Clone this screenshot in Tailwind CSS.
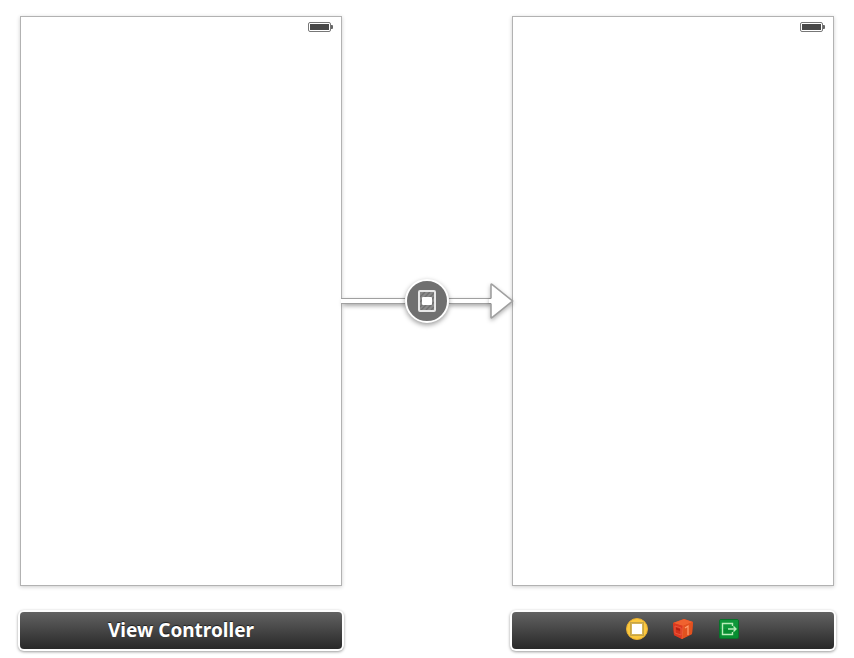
<!DOCTYPE html>
<html lang="en">
<head>
<meta charset="utf-8">
<meta name="viewport" content="width=device-width, initial-scale=1">
<title>Storyboard</title>
<script src="https://cdn.jsdelivr.net/npm/@tailwindcss/browser@4"></script>
</head>
<body class="bg-white font-['Noto_Sans','Open_Sans',sans-serif]">
<main class="grid grid-cols-[322fr_170fr_322fr] gap-y-[26px] px-5 pt-4 pb-2">

  <section aria-label="View Controller scene" class="flex min-h-[570px] items-start justify-end border border-[#b2b2b2] bg-white px-[7px] pt-[5px] shadow-[0_1px_4px_rgba(0,0,0,0.2)]">
    <svg class="block" width="26" height="10" viewBox="0 0 26 10" role="img" aria-label="Battery full">
      <rect x=".5" y=".5" width="22" height="9" rx="1.5" fill="#fff" stroke="#777"/>
      <rect x="2" y="2" width="19" height="6" fill="#484848"/>
      <path d="M23 3h1q1 0 1 1v2q0 1-1 1h-1z" fill="#666"/>
    </svg>
  </section>

  <div class="z-10 -ml-px flex items-center">
    <div class="h-[6px] flex-1 border-y border-[#a0a0a0] bg-white shadow-[2px_2px_4px_rgba(0,0,0,0.35)]"></div>
    <button type="button" aria-label="Modal segue" class="z-10 flex size-11 shrink-0 items-center justify-center rounded-full border-2 border-white bg-[#707070] shadow-[0_2px_5px_rgba(0,0,0,0.4)]">
      <svg class="block" width="18" height="22" viewBox="0 0 18 22" aria-hidden="true">
        <rect x="1" y="1" width="16" height="20" rx="1" fill="#8a8a8a"/>
        <path d="M2 7l5-5M2 12L12 2M2 17L16 3M3 20L16 7M8 20l8-8M13 20l3-3" stroke="#707070" stroke-width="1.4"/>
        <rect x="1" y="1" width="16" height="20" rx="1" fill="none" stroke="#e8e8e8" stroke-width="2"/>
        <rect x="4" y="7" width="10" height="8" rx="1" fill="#fff"/>
      </svg>
    </button>
    <div class="flex flex-1 items-center">
      <div class="h-[6px] flex-1 border-y border-[#a0a0a0] bg-white shadow-[0_2px_4px_rgba(0,0,0,0.35)]"></div>
      <svg class="-mr-px -ml-px block shrink-0 overflow-visible drop-shadow-[0_2px_2px_rgba(0,0,0,0.3)]" width="23" height="36" viewBox="0 0 23 36" aria-hidden="true">
        <path d="M1 15.5V2Q1 .5 2 1.3L22.500 18L2 34.7Q1 35.5 1 34V20.5" fill="#fff" stroke="#a0a0a0" stroke-width="1.6"/>
        <path d="M-1 16h4v4h-4z" fill="#fff"/>
      </svg>
    </div>
  </div>

  <section aria-label="Destination scene" class="flex min-h-[570px] items-start justify-end border border-[#b2b2b2] bg-white px-[7px] pt-[5px] shadow-[0_1px_4px_rgba(0,0,0,0.2)]">
    <svg class="block" width="26" height="10" viewBox="0 0 26 10" role="img" aria-label="Battery full">
      <rect x=".5" y=".5" width="22" height="9" rx="1.5" fill="#fff" stroke="#777"/>
      <rect x="2" y="2" width="19" height="6" fill="#484848"/>
      <path d="M23 3h1q1 0 1 1v2q0 1-1 1h-1z" fill="#666"/>
    </svg>
  </section>

  <h2 class="flex h-[37px] items-center justify-center rounded-[4px] bg-linear-to-b from-[#636363] to-[#292929] pb-[2px] text-[19px] leading-6 font-bold text-white shadow-[0_0_0_2px_#fff,0_1px_3px_2px_rgba(0,0,0,0.4)] text-shadow-[0_-1px_1px_rgba(0,0,0,0.6)]">View Controller</h2>

  <div class="col-start-3 flex h-[37px] items-center justify-center gap-6 rounded-[4px] bg-linear-to-b from-[#636363] to-[#292929] pb-[3px] pl-[19px] shadow-[0_0_0_2px_#fff,0_1px_3px_2px_rgba(0,0,0,0.4)]">
    <button type="button" aria-label="View Controller">
      <svg class="block" width="22" height="22" viewBox="0 0 22 22" aria-hidden="true">
        <circle cx="11" cy="11" r="10.5" fill="#fbc83f" stroke="#e7ae31"/>
        <rect x="4.5" y="4.5" width="13" height="13" fill="#d4b257" stroke="#a88d3d" stroke-dasharray="1 1"/>
        <rect x="6" y="6" width="10" height="10" fill="#fff"/>
      </svg>
    </button>
    <button type="button" aria-label="First Responder">
      <svg class="block" width="22" height="22" viewBox="0 0 22 22" aria-hidden="true">
        <path d="M1 5L12 1L21 4L20 16L10 21L2 17Z" fill="#dc3e1c"/>
        <path d="M1 5L12 1L21 4L11 8Z" fill="#f0622f"/>
        <path d="M1 5L11 8L10 21L2 17Z" fill="#dc3820"/>
        <path d="M11 8L21 4L20 16L10 21Z" fill="#e2521f"/>
        <path d="M3 8L9 10V17L3 15Z" fill="#d4321c" stroke="#ee6040" stroke-width=".8"/>
        <path d="M4 9.500L8 11V13L4 11.500Z" fill="#b52012"/>
        <path d="M13 10L16 8V17" fill="none" stroke="#ffa070" stroke-width="1.2"/>
        <path d="M11 8L10 21" stroke="#ee6038" stroke-width=".8"/>
      </svg>
    </button>
    <button type="button" aria-label="Exit">
      <svg class="block" width="22" height="22" viewBox="0 0 22 22" aria-hidden="true">
        <rect x="1.5" y="1.5" width="19" height="19" rx="1.5" fill="#078e31" stroke="#08722a"/>
        <path d="M2 2h18v9H2z" fill="#17a043" opacity=".5"/>
        <path d="M14.5 8V5.5H4.5V16.5H14.5V14M10 11h8M15.5 8.5L18 11L15.5 13.5" fill="none" stroke="#b8edb9" stroke-width="1.4"/>
      </svg>
    </button>
  </div>
</main>
</body>
</html>
